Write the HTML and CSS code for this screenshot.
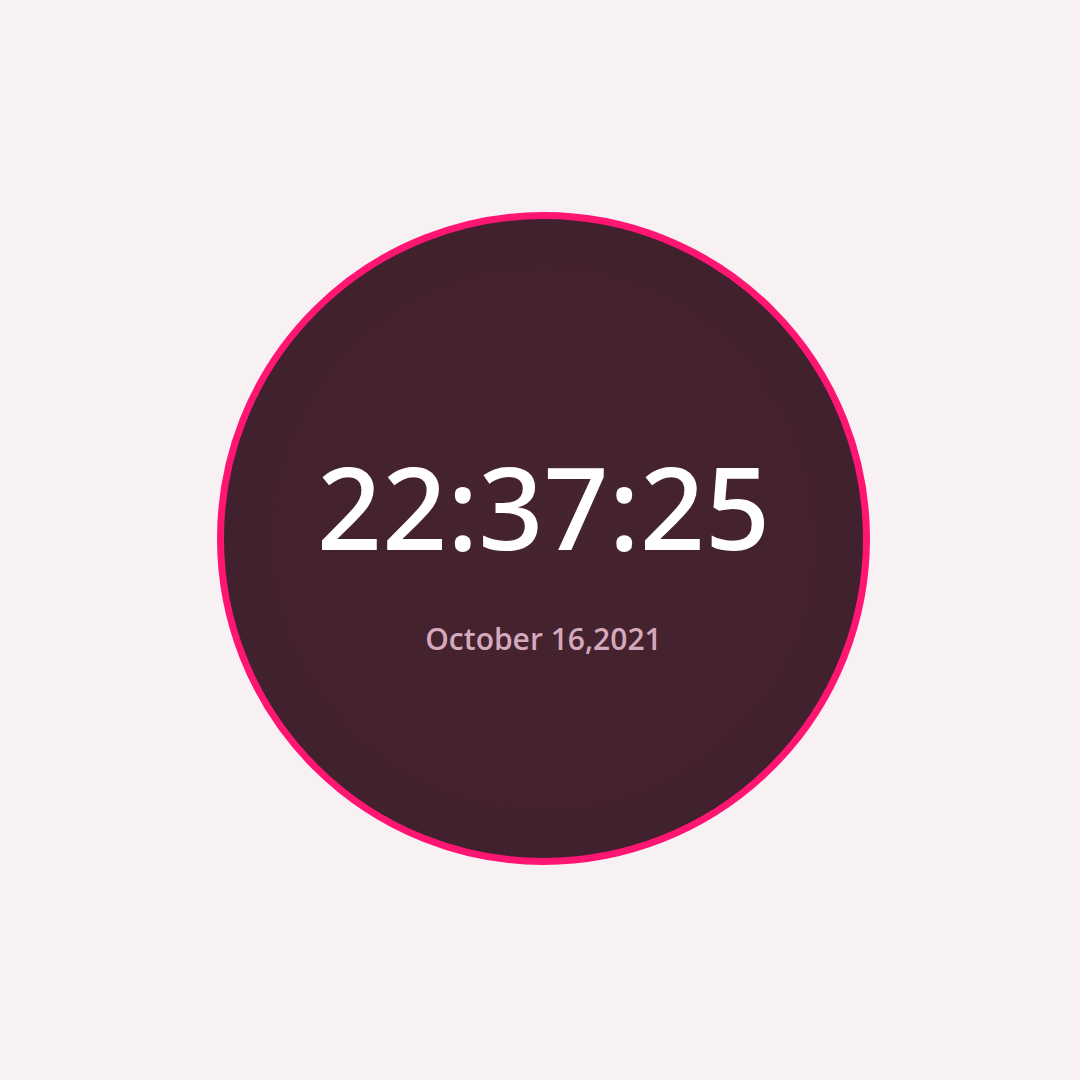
FILE: index.html
```html
<!DOCTYPE html>
<html>
<head>
<meta charset="utf-8">
<link rel="stylesheet" href="styles.css">
</head>
<body>
<div class="stage">
  <div class="clock">
    <div class="time">22:37:25</div>
    <div class="date">October 16,2021</div>
  </div>
</div>
</body>
</html>
```
FILE: styles.css
```css
html, body {
  margin: 0;
  padding: 0;
  background: #f7f1f3;
}
.stage {
  width: 1080px;
  height: 1080px;
  box-sizing: border-box;
  padding: 0 0 4px 7px;
  display: flex;
  align-items: center;
  justify-content: center;
}
.clock {
  width: 653px;
  height: 653px;
  box-sizing: border-box;
  border: 7px solid #ff1673;
  border-radius: 50%;
  background: radial-gradient(circle at center, #45232f 0%, #43222e 60%, #3a1e29 100%);
  display: flex;
  flex-direction: column;
  align-items: center;
  justify-content: center;
  font-family: "Open Sans", "Noto Sans", sans-serif;
}
.time {
  color: #ffffff;
  font-family: "Noto Sans", "Open Sans", sans-serif;
  font-size: 114px;
  font-weight: 500;
  line-height: 1;
  letter-spacing: 0;
  margin-top: 31px;
}
.date {
  color: #d6a8bd;
  font-size: 30px;
  font-weight: 600;
  margin-top: 55px;
}
```
